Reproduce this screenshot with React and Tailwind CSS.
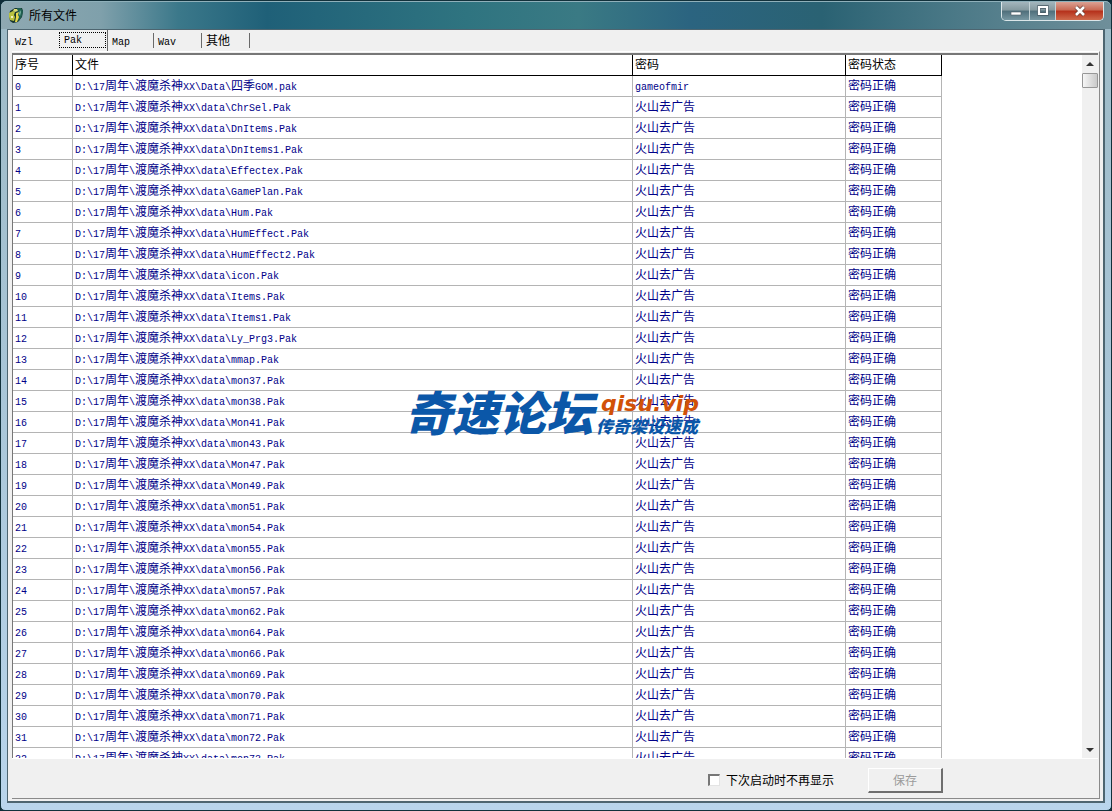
import { useState } from 'react';

// ── Data ──────────────────────────────────────────────────────────────────────

const TABS = [
  { label: 'Wzl', width: 'w-[48px]' },
  { label: 'Pak', width: 'w-[49px]' },
  { label: 'Map', width: 'w-[46px]' },
  { label: 'Wav', width: 'w-[48px]' },
  { label: '其他', width: 'w-[48px]' },
];

const FILES = [
  'Data\\四季GOM.pak', 'data\\ChrSel.Pak', 'data\\DnItems.Pak', 'data\\DnItems1.Pak',
  'data\\Effectex.Pak', 'data\\GamePlan.Pak', 'data\\Hum.Pak', 'data\\HumEffect.Pak',
  'data\\HumEffect2.Pak', 'data\\icon.Pak', 'data\\Items.Pak', 'data\\Items1.Pak',
  'data\\Ly_Prg3.Pak', 'data\\mmap.Pak', 'data\\mon37.Pak', 'data\\mon38.Pak',
  'data\\Mon41.Pak', 'data\\mon43.Pak', 'data\\Mon47.Pak', 'data\\Mon49.Pak',
  'data\\mon51.Pak', 'data\\mon54.Pak', 'data\\mon55.Pak', 'data\\mon56.Pak',
  'data\\mon57.Pak', 'data\\mon62.Pak', 'data\\mon64.Pak', 'data\\mon66.Pak',
  'data\\mon69.Pak', 'data\\mon70.Pak', 'data\\mon71.Pak', 'data\\mon72.Pak',
  'data\\mon73.Pak',
];

const ROWS = FILES.map((file, i) => ({
  path: `D:\\17周年\\渡魔杀神XX\\${file}`,
  password: i === 0 ? 'gameofmir' : '火山去广告',
  state: '密码正确',
}));

// ── Text ──────────────────────────────────────────────────────────────────────

// Latin runs are half as wide as a Chinese character
function Mixed({ text }) {
  return String(text).split(/([\x20-\x7e]+)/).filter(Boolean).map((part, i) =>
    /^[\x20-\x7e]/.test(part)
      ? <span key={i} className="font-['Liberation_Mono',monospace] text-[10px] leading-none">{part}</span>
      : <span key={i}>{part}</span>
  );
}

// ── Title bar ─────────────────────────────────────────────────────────────────

function AppIcon() {
  return (
    <svg viewBox="0 0 16 16" className="w-4 h-4 shrink-0" aria-hidden="true">
      <path d="M2 4 7 1l7 0 1 3-1 6-4 5-5 1-3-2-1-5z" fill="#17352f" />
      <path d="M9 1h4l2 3-1 5-3 5-2-2 1-5z" fill="#1f5f50" />
      <path d="M1 6l4-2 2 1-1 3 1 2-1 4-4-1-1-3z" fill="#b9c23f" />
      <path d="M6 2h3l1 2-3 1-2-1z" fill="#d9dc78" />
      <path d="M8 6l3-1-1 3 1 2-2 5H7l1-5z" fill="#e6d84c" />
      <path d="M3 9h2v2H3z" fill="#f4f3c0" />
      <path d="M12 3l1 2-1 4-1-2z" fill="#79b6a0" />
    </svg>
  );
}

const GLASS_BUTTON = 'flex items-center justify-center border-r border-[#c3d2d6] bg-[linear-gradient(#a3b5bc_0,#84999f_45%,#4f6f7b_50%,#7797a2_100%)]';

function TitleBar() {
  return (
    <header className="flex h-[27px] shrink-0 justify-between pl-[1px] pr-[1px]">
      <div className="flex items-center gap-[5px] pb-[2px]">
        <AppIcon />
        <h1 className="text-[12px] leading-4 text-black">所有文件</h1>
      </div>
      <div className="flex h-[19px] overflow-hidden rounded-b-[5px] border border-t-0 border-[#dbe6e9]">
        <button type="button" aria-label="最小化" className={`${GLASS_BUTTON} w-[28px]`}>
          <svg viewBox="0 0 12 12" className="w-3 h-3"><path d="M1 7h10v3H1z" fill="#fff" stroke="#4d5d66" strokeWidth=".6" /></svg>
        </button>
        <button type="button" aria-label="最大化" className={`${GLASS_BUTTON} w-[26px]`}>
          <svg viewBox="0 0 12 12" className="w-3 h-3"><path d="M2 2h8v7H2z" fill="none" stroke="#455762" strokeWidth="3.4" /><path d="M2 2h8v7H2z" fill="none" stroke="#fff" strokeWidth="2.2" /></svg>
        </button>
        <button type="button" aria-label="关闭" className="flex w-[47px] items-center justify-center bg-[linear-gradient(#dba294_0,#c86852_45%,#b5301a_50%,#cf6a4c_100%)]">
          <svg viewBox="0 0 12 12" className="w-3 h-3"><path d="M2 2l8 8M10 2l-8 8" stroke="#66382f" strokeWidth="4" /><path d="M2 2l8 8M10 2l-8 8" stroke="#fff" strokeWidth="2.6" /></svg>
        </button>
      </div>
    </header>
  );
}

// ── Tabs ──────────────────────────────────────────────────────────────────────

function TabStrip({ active, onSelect }) {
  return (
    <div role="tablist" className="flex h-[21px] shrink-0 -ml-[1px] bg-[#f0f0f0]">
      {TABS.map(({ label, width }) => {
        const selected = label === active;
        return (
          <button
            key={label}
            type="button"
            role="tab"
            aria-selected={selected}
            onClick={() => onSelect(label)}
            className={`${width} h-full text-left leading-4 text-black ${selected ? 'border-r border-[#6a6a6a] pt-[2px] pr-[1px] pb-[3px]' : 'py-[3px]'}`}
          >
            <span
              className={`flex h-full items-center ${selected
                ? 'border border-dotted border-black pl-1 pb-[4px]'
                : `pl-1 pb-[2px] ${label === 'Wzl' ? '' : 'border-r border-[#6a6a6a]'}`}`}
            >
              <span><Mixed text={label} /></span>
            </span>
          </button>
        );
      })}
    </div>
  );
}

// ── File grid ─────────────────────────────────────────────────────────────────

const HEAD_CELL = 'h-[21px] border-r border-b border-black px-[2px] pb-[2px] text-left font-normal text-black';
const BODY_CELL = 'h-[21px] border-r border-b border-[#b4b4b4] px-[2px] pb-[3px] whitespace-nowrap';

function FileTable() {
  return (
    <table className="w-[929px] table-fixed border-separate border-spacing-0 leading-4 text-[#000088]">
      <colgroup>
        <col className="w-[60px]" />
        <col className="w-[560px]" />
        <col className="w-[213px]" />
        <col className="w-[96px]" />
      </colgroup>
      <thead>
        <tr>
          {['序号', '文件', '密码', '密码状态'].map(title => (
            <th key={title} className={HEAD_CELL}>{title}</th>
          ))}
        </tr>
      </thead>
      <tbody>
        {ROWS.map((row, i) => (
          <tr key={row.path}>
            <td className={BODY_CELL}><Mixed text={i} /></td>
            <td className={BODY_CELL}><Mixed text={row.path} /></td>
            <td className={BODY_CELL}><Mixed text={row.password} /></td>
            <td className={BODY_CELL}><Mixed text={row.state} /></td>
          </tr>
        ))}
      </tbody>
    </table>
  );
}

function ScrollBar() {
  return (
    <div className="flex w-[16px] shrink-0 flex-col bg-[#f0f0f0]">
      <button type="button" aria-label="向上" className="flex h-[17px] items-center justify-center">
        <svg viewBox="0 0 8 4" className="w-2 h-1"><path d="M0 4 4 0l4 4z" fill="#333" /></svg>
      </button>
      <div className="mt-[1px] h-[15px] rounded-[1px] border border-[#979797] bg-linear-to-r from-[#f6f6f6] to-[#c9c9c9]" />
      <div className="flex-1" />
      <button type="button" aria-label="向下" className="flex h-[17px] items-center justify-center">
        <svg viewBox="0 0 8 4" className="w-2 h-1"><path d="M0 0h8L4 4z" fill="#333" /></svg>
      </button>
    </div>
  );
}

function Watermark() {
  return (
    <div className="pointer-events-none absolute top-[380px] left-[405px] flex gap-[3px] font-black italic whitespace-nowrap text-[#0b57a8]">
      <span className="text-[47px] leading-[62px]">奇速论坛</span>
      <span className="flex flex-col pt-[14px]">
        <span className="pl-[5px] font-['DejaVu_Sans',sans-serif] text-[22px] leading-[20px] font-bold text-[#d15108]">qisu.vip</span>
        <span className="text-[17px] leading-[24px]">传奇架设速成</span>
      </span>
    </div>
  );
}

// ── Window ────────────────────────────────────────────────────────────────────

export default function App() {
  const [tab, setTab] = useState('Pak');
  const [hideNext, setHideNext] = useState(false);

  return (
    <div className="relative h-screen overflow-hidden bg-[#0e2c38] font-['Noto_Sans_CJK_SC',sans-serif] text-[12px]">
      <div className="h-full rounded-t-[7px] rounded-b-[5px] border border-[#12313b] bg-linear-to-b from-[#9dbac6] via-[#a9c6d8] to-[#b9d5ec]">
        <div className="flex h-full flex-col rounded-t-[6px] border-t border-[#8fb0ba] bg-[linear-gradient(90deg,#8fa9b2_0,#7fa0ab_9%,#3b788a_16%,#1f6078_24%,#2f7480_42%,#3a7a84_52%,#2b6480_62%,#2a6273_74%,#4b7987_86%,#6f8f9a_100%)] bg-[length:100%_27px] bg-no-repeat px-[6px] pb-[7px]">
          <TitleBar />
          <main className="flex min-h-0 flex-1 flex-col border border-r-2 border-b-2 border-[#4d6570] bg-[#f0f0f0] pr-[3px] pb-[2px] pl-[4px]">
            <TabStrip active={tab} onSelect={setTab} />
            <section className="flex min-h-0 flex-1 flex-col border-t border-r border-b border-white border-r-[#8a8a8a] border-b-[#8a8a8a] pt-[1px] pr-[1px]">
              <div className="flex min-h-0 flex-1 border-t-2 border-l border-[#777] bg-white">
                <div className="min-w-0 flex-1 overflow-hidden"><FileTable /></div>
                <ScrollBar />
              </div>
              <footer className="flex h-[40px] shrink-0 items-center justify-end gap-[34px] border-t border-white pt-[3px] pr-[155px]">
                <label className="flex items-center gap-[6px] leading-4 text-black">
                  <input
                    type="checkbox"
                    checked={hideNext}
                    onChange={e => setHideNext(e.target.checked)}
                    className="h-[12px] w-[12px] appearance-none border border-t-2 border-l-2 border-[#e4e4e4] border-t-[#777] border-l-[#777] bg-white checked:bg-[#555]"
                  />
                  下次启动时不再显示
                </label>
                <button
                  type="button"
                  disabled
                  className="h-[25px] w-[75px] border border-r-2 border-b-2 border-white border-r-[#6e6e6e] border-b-[#6e6e6e] text-[#9b9b9b]"
                >
                  保存
                </button>
              </footer>
            </section>
          </main>
        </div>
      </div>
      <Watermark />
    </div>
  );
}
